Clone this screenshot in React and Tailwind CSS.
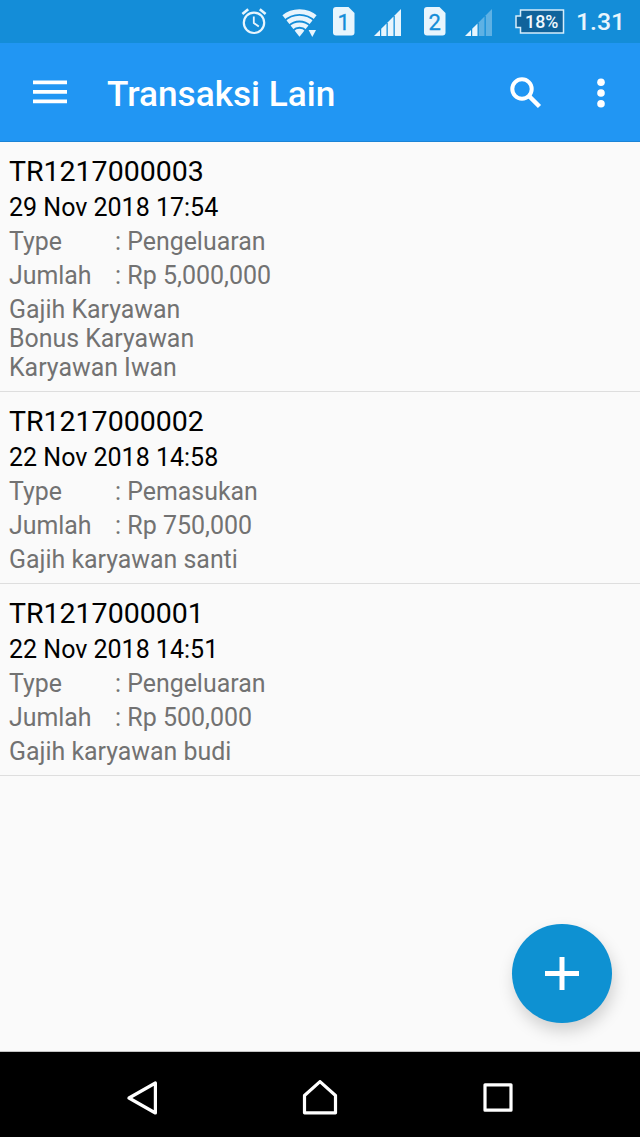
const transactions = [
  {
    code: "TR1217000003",
    date: "29 Nov 2018 17:54",
    type: "Pengeluaran",
    amount: "Rp 5,000,000",
    notes: ["Gajih Karyawan", "Bonus Karyawan", "Karyawan Iwan"],
  },
  {
    code: "TR1217000002",
    date: "22 Nov 2018 14:58",
    type: "Pemasukan",
    amount: "Rp 750,000",
    notes: ["Gajih karyawan santi"],
  },
  {
    code: "TR1217000001",
    date: "22 Nov 2018 14:51",
    type: "Pengeluaran",
    amount: "Rp 500,000",
    notes: ["Gajih karyawan budi"],
  },
];

function AlarmIcon() {
  return (
    <svg width="26" height="28" viewBox="0 0 26 28" fill="none" stroke="#e8f5fd">
      <circle cx="13" cy="15.8" r="10.2" strokeWidth="2.2" />
      <path d="M12.8 9.5v6.5l5 3.6" strokeWidth="1.8" />
      <path d="M1.4 7L7.2 2.2M24.6 7L18.8 2.2" strokeWidth="2.6" />
    </svg>
  );
}

function WifiIcon() {
  return (
    <svg width="36" height="29" viewBox="0 0 36 29">
      <clipPath id="fan">
        <path d="M17.5 28.8L-1 5.5V0H36V5.5z" />
      </clipPath>
      <g clipPath="url(#fan)" fill="none" stroke="#e8f5fd">
        <circle cx="17.5" cy="28.8" r="25.2" strokeWidth="4.8" />
        <circle cx="17.5" cy="28.8" r="18.6" strokeWidth="4.8" />
        <circle cx="17.5" cy="28.8" r="12.2" strokeWidth="4.4" />
        <circle cx="17.5" cy="28.8" r="4" strokeWidth="8" />
      </g>
      <path d="M26.6 22h7.4L30.3 29z" fill="#e8f5fd" stroke="#148dd8" strokeWidth="1.6" paintOrder="stroke" />
    </svg>
  );
}

function SimIcon({ number }) {
  return (
    <svg width="22" height="29" viewBox="0 0 22 29">
      <path
        d="M3 0h12.5L21.5 6v19.5a3 3 0 0 1-3 3H3a3 3 0 0 1-3-3V3a3 3 0 0 1 3-3z"
        fill="#e8f5fd"
      />
      <text
        x="10.6"
        y="22.6"
        textAnchor="middle"
        fill="#148dd8"
        stroke="#148dd8"
        strokeWidth="0.3"
        className="font-[Roboto] text-[22px]"
      >
        {number}
      </text>
    </svg>
  );
}

function SignalIcon({ level }) {
  const bars = [
    "M0 27L6 21V27z",
    "M7.2 19.8L12.5 14.5V27H7.2z",
    "M13.8 13.2L19.5 7.500V27H13.800z",
    "M20.8 6.2L27 0V27H20.8z",
  ];
  return (
    <svg width="27" height="27" viewBox="0 0 27 27" fill="#e8f5fd">
      {bars.map((d, i) => (
        <path key={d} d={d} opacity={i < level ? 1 : 0.35} />
      ))}
    </svg>
  );
}

function BatteryIcon() {
  return (
    <svg width="50" height="26" viewBox="0 0 50 26">
      <path
        d="M5.5 1H48.5V24H5.5V18.5H1V7H5.5z"
        fill="#10639b"
        stroke="#d5edfb"
        strokeWidth="1.5"
      />
      <text
        x="26.7"
        y="18.8"
        textAnchor="middle"
        fill="#f0f9ff"
        className="font-[Roboto] text-[17.8px] font-medium"
      >
        18%
      </text>
    </svg>
  );
}

function StatusBar() {
  return (
    <div className="flex h-[43px] shrink-0 items-start justify-end bg-[#148dd8] pr-[15px]">
      <div className="mt-[7px] mr-[15px]">
        <AlarmIcon />
      </div>
      <div className="mt-[8px] mr-[15px]">
        <WifiIcon />
      </div>
      <div className="mt-[7px] mr-[19px]">
        <SimIcon number="1" />
      </div>
      <div className="mt-[9px] mr-[23px]">
        <SignalIcon level={4} />
      </div>
      <div className="mt-[7px] mr-[19px]">
        <SimIcon number="2" />
      </div>
      <div className="mt-[9px] mr-[23px]">
        <SignalIcon level={2} />
      </div>
      <div className="mt-[9px] mr-[11px]">
        <BatteryIcon />
      </div>
      <span className="mt-[7px] w-[49px] text-[24.8px] leading-[29px] font-medium text-[#e8f5fd]">
        1.31
      </span>
    </div>
  );
}

function Header() {
  return (
    <header className="flex h-[99px] shrink-0 items-center border-b border-[#1b84d6] bg-[#2196f3] pl-[33px] text-white">
      <button aria-label="Menu">
        <svg width="34" height="24" viewBox="0 0 34 24" fill="currentColor">
          <path d="M0 .5h34v3.7H0zM0 10h34v3.7H0zM0 19.5h34v3.7H0z" />
        </svg>
      </button>
      <h1 className="ml-[40px] pt-[3px] text-[35.2px] leading-[42px] font-medium">
        Transaksi Lain
      </h1>
      <button aria-label="Search" className="ml-auto pt-[2px]">
        <svg width="32" height="32" viewBox="0 0 32 32" fill="none" stroke="currentColor">
          <circle cx="12" cy="12" r="9.7" strokeWidth="4" />
          <path d="M19.5 19.5L29.5 29.5" strokeWidth="4.5" />
        </svg>
      </button>
      <button aria-label="More" className="mr-[35px] ml-[55px] pt-px">
        <svg width="8" height="30" viewBox="0 0 8 30" fill="currentColor">
          <circle cx="4" cy="4.2" r="3.8" />
          <circle cx="4" cy="15" r="3.8" />
          <circle cx="4" cy="25.8" r="3.8" />
        </svg>
      </button>
    </header>
  );
}

function Transaction({ item }) {
  return (
    <li className="border-b border-[#dedede] px-[9px] pt-[13px] pb-[9px] text-[24.9px] leading-[29px] text-[#727272]">
      <h2 className="text-[28.5px] leading-[33px] text-black">{item.code}</h2>
      <p className="mt-[5px] text-[25px] text-black">{item.date}</p>
      <div className="mt-[5px] flex">
        <span className="w-[106px]">Type</span>
        <span>: {item.type}</span>
      </div>
      <div className="mt-[5px] flex">
        <span className="w-[106px]">Jumlah</span>
        <span className="text-[25px]">: {item.amount}</span>
      </div>
      <div className="mt-[5px]">
        {item.notes.map((note) => (
          <p key={note}>{note}</p>
        ))}
      </div>
    </li>
  );
}

function NavigationBar() {
  return (
    <nav className="flex h-[85px] shrink-0 items-center bg-black pt-[6px] text-white">
      <button aria-label="Back" className="ml-[127px]">
        <svg width="31" height="34" viewBox="0 0 31 34" fill="none" stroke="currentColor" strokeWidth="3.2" strokeLinejoin="round">
          <path d="M28.4 2V32L2 17z" />
        </svg>
      </button>
      <button aria-label="Home" className="ml-[144px]">
        <svg width="36" height="36" viewBox="0 0 36 36" fill="none" stroke="currentColor" strokeWidth="3.2" strokeLinejoin="round">
          <path d="M18 1.6L33.5 15.5V32.8H2.5V15.5z" />
        </svg>
      </button>
      <button aria-label="Recent" className="ml-[145px]">
        <svg width="30" height="30" viewBox="0 0 30 30" fill="none" stroke="currentColor" strokeWidth="3.2" strokeLinejoin="round">
          <path d="M2 1.8H28V27.2H2z" />
        </svg>
      </button>
    </nav>
  );
}

function App() {
  return (
    <div className="flex h-[1137px] w-[640px] flex-col overflow-hidden bg-[#fafafa] font-[Roboto,sans-serif]">
      <StatusBar />
      <Header />
      <main className="relative flex-1 border-b border-[#c4c4c4]">
        <ul>
          {transactions.map((item) => (
            <Transaction key={item.code} item={item} />
          ))}
        </ul>
        <button
          aria-label="Add"
          className="absolute right-[28px] bottom-[28px] flex h-[99px] w-[100px] items-center justify-center rounded-full bg-[#0e91d2] text-white shadow-[2px_8px_16px_rgba(0,0,0,0.17)]"
        >
          <svg width="34" height="33" viewBox="0 0 34 33" fill="currentColor">
            <path d="M14.5 0h5v14H34v5H19.5V33h-5V19H0v-5h14.5z" />
          </svg>
        </button>
      </main>
      <NavigationBar />
    </div>
  );
}

export default App;
